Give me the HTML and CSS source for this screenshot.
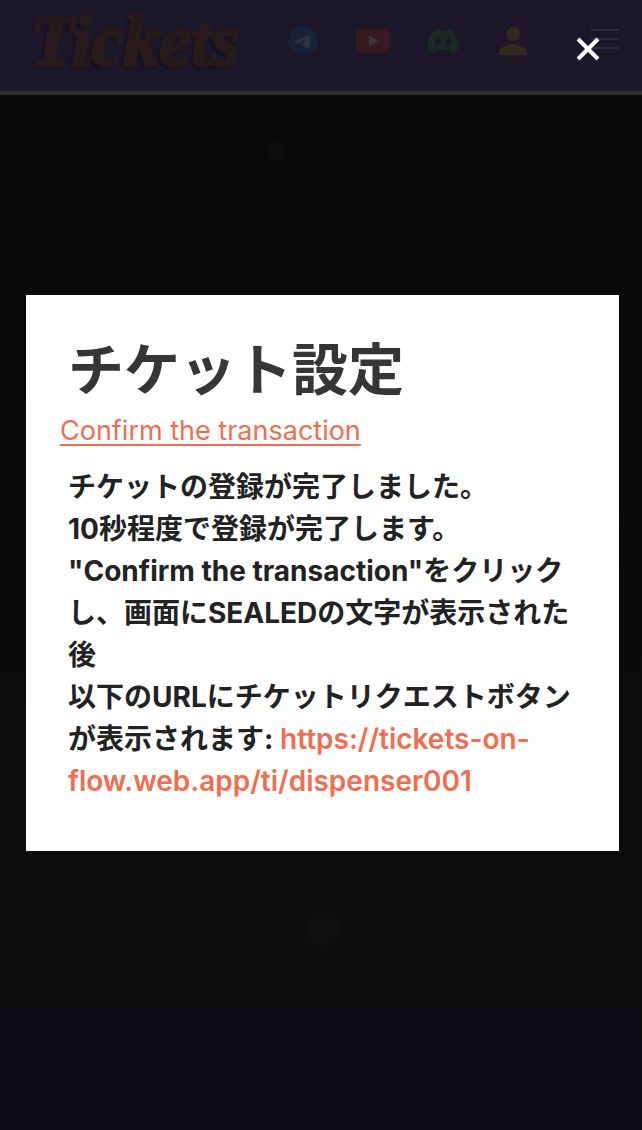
FILE: index.html
```html
<!DOCTYPE html>
<html lang="ja">
<head>
<meta charset="utf-8">
<meta name="viewport" content="width=device-width, initial-scale=1">
<title>Tickets</title>
<link rel="stylesheet" href="styles.css">
</head>
<body>
<div class="page">
  <header class="topbar">
    <a class="logo" href="#">Tickets</a>
    <nav class="nav" aria-label="メニュー">
      <a class="nav-item" href="#" aria-label="Telegram">
        <svg width="34" height="34" viewBox="0 0 34 34"><circle cx="17" cy="17" r="15" fill="#172236"/><path d="M7.500 17.500L24 10.500 23 25 17 21.500 14.500 22.500 20.500 14 12.500 19.500z" fill="#30333a"/></svg>
      </a>
      <a class="nav-item" href="#" aria-label="YouTube">
        <svg width="34" height="34" viewBox="0 0 34 34"><rect y="5" width="34" height="24" rx="5" fill="#351920"/><path d="M13 11.500v11L22 17z" fill="#3c3536"/></svg>
      </a>
      <a class="nav-item" href="#" aria-label="Discord">
        <svg width="34" height="34" viewBox="0 0 34 34"><path fill-rule="evenodd" d="M7 7l6-2 1.500 2h5L21 5l6 2c3 4 6 12 5.500 18-2 2-4 3-7 4l-2-3 2-1.500c-5 2-12 2-17 0l2 1.500-2 3c-3-1-5-2-7-4C1 19 4 11 7 7zM12 14.500a3 3.500 0 1 0 0 7 3 3.500 0 0 0 0-7zM22.500 14.500a3 3.500 0 1 0 0 7 3 3.500 0 0 0 0-7z" fill="#182a22"/></svg>
      </a>
      <a class="nav-item" href="#" aria-label="アカウント">
        <svg width="34" height="34" viewBox="0 0 34 34"><circle cx="17" cy="10" r="7" fill="#30291e"/><path d="M3 31v-3c0-5 8-7.500 14-7.500S31 23 31 28v3z" fill="#30291e"/></svg>
      </a>
      <button class="nav-item menu" type="button" aria-label="メニューを開く">
        <svg width="34" height="34" viewBox="0 0 34 34"><path d="M3 6h28M3 15h28M3 24h28" stroke="#2d2b35" stroke-width="2"/></svg>
      </button>
    </nav>
  </header>
</div>
<div class="overlay">
  <button class="close" type="button" aria-label="閉じる">
    <svg width="24" height="24" viewBox="0 0 24 24"><path d="M2 2l20 20M22 2L2 22" stroke="#fff" stroke-width="4"/></svg>
  </button>
  <section class="dialog" role="dialog" aria-modal="true" aria-labelledby="dialog-title">
    <h1 class="title" id="dialog-title">チケット設定</h1>
    <a class="confirm" href="#">Confirm the transaction</a>
    <p class="message">チケットの登録が完了しました。<br>10秒程度で登録が完了します。<br>"Confirm the transaction"をクリックし、画面にSEALEDの文字が表示された後<br>以下のURLにチケットリクエストボタンが表示されます: <a class="url" href="#">https://tickets-on-flow.web.app/ti/dispenser001</a></p>
  </section>
</div>
</body>
</html>
```

FILE: styles.css
```css
* {
  box-sizing: border-box;
}

body {
  margin: 0;
  background: #0a0a0a;
  font-family: Inter, "Noto Sans CJK JP", sans-serif;
}

.page {
  min-height: 100vh;
  background:
    radial-gradient(circle at 322px 929px, #0f100f 12px, transparent 22px),
    radial-gradient(circle at 277px 150px, #0d0d0d 6px, transparent 12px),
    linear-gradient(#090909 0%, #090909 30%, #0d0c10 100%);
}

.topbar {
  display: flex;
  align-items: center;
  justify-content: space-between;
  height: 95px;
  padding: 0 20px 0 30px;
  background: #1b1628;
  border-bottom: 4px solid #2d2d2d;
}

.logo {
  padding-bottom: 10px;
  color: #281a1b;
  font-family: "Liberation Serif", serif;
  font-size: 72px;
  font-style: italic;
  font-weight: 700;
  line-height: 80px;
  text-decoration: none;
  text-shadow: -2px 2px 3px #100d18;
  -webkit-text-stroke: 3px #281a1b;
}

.nav {
  display: flex;
  gap: 36px;
  padding-bottom: 10px;
}

.nav-item {
  display: flex;
}

.menu {
  margin-left: 22px;
  padding: 0;
  border: 0;
  background: none;
}

.overlay {
  position: fixed;
  inset: 0;
  display: flex;
  align-items: center;
  padding: 16px 23px 0 26px;
}

.close {
  position: absolute;
  top: 37px;
  right: 42px;
  display: flex;
  padding: 0;
  border: 0;
  background: none;
}

.dialog {
  flex: 1;
  padding: 43px 42px 49px;
  background: #fff;
}

.title {
  margin: 0;
  color: #363636;
  font-size: 56px;
  font-weight: 700;
  line-height: 64px;
}

.confirm {
  display: block;
  margin: 8px 0 14px -8px;
  color: #f16d50;
  font-size: 27px;
  font-weight: 400;
  line-height: 42px;
  text-decoration: underline;
  text-decoration-thickness: 2px;
  text-underline-offset: 4px;
}

.message {
  margin: 0;
  color: #222;
  font-size: 28px;
  font-weight: 700;
  line-height: 42px;
}

.url {
  color: #f16d50;
  font-weight: 600;
  text-decoration: none;
}
```
